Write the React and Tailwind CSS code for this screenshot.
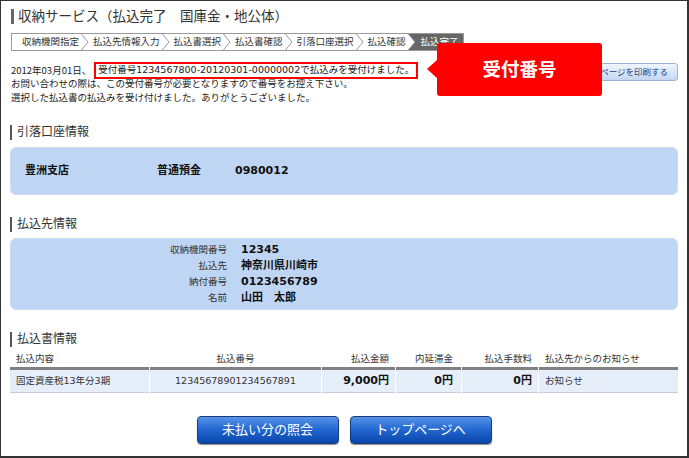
const steps = [
  "収納機関指定",
  "払込先情報入力",
  "払込書選択",
  "払込書確認",
  "引落口座選択",
  "払込確認",
];

function Chevron({ last }) {
  return (
    <svg width="8" height="16" viewBox="0 0 8 16" className="block shrink-0">
      {last && <polygon points="0,0 8,0 8,16 0,16 7,8" fill="#666666" />}
      <polyline
        points="0,-0.5 7,8 0,16.5"
        fill="none"
        stroke="#9a9a9a"
        strokeWidth="1"
      />
    </svg>
  );
}

function SectionTitle({ children }) {
  return (
    <div className="flex h-4 items-center gap-[5px]">
      <span className="h-[15px] w-[2px] bg-[#555]" />
      <span className="text-[12px] leading-4 text-[#333]">{children}</span>
    </div>
  );
}

const payee = [
  ["収納機関番号", "12345"],
  ["払込先", "神奈川県川崎市"],
  ["納付番号", "0123456789"],
  ["名前", "山田　太郎"],
];

export default function App() {
  return (
    <div className="relative h-[458px] w-[689px] overflow-hidden border-t border-l border-r-2 border-b-2 border-[#333] bg-white pl-[9px] pr-[9px] font-['DejaVu_Sans','Noto_Sans_CJK_JP',sans-serif] text-[#222]">
      {/* title */}
      <div className="mt-[7px] flex h-4 items-center gap-[4px]">
        <span className="ml-[1px] h-[15px] w-[3px] bg-[#666]" />
        <h1 className="text-[13.5px] leading-4 text-[#333]">
          収納サービス（払込完了　国庫金・地公体）
        </h1>
      </div>

      {/* steps */}
      <div className="ml-[1px] mt-[9px] flex h-[18px] w-fit border border-[#9a9a9a] text-[9.5px] leading-4 text-[#333]">
        {steps.map((s, i) => (
          <div key={s} className="flex">
            <span className={`${i === 0 ? "pl-[10px]" : "pl-[4px]"} pr-[2px]`}>
              {s}
            </span>
            <Chevron last={i === steps.length - 1} />
          </div>
        ))}
        <span className="bg-[#666] pl-[5px] pr-[4px] text-white">払込完了</span>
      </div>

      {/* message */}
      <div className="mt-[11px] flex items-start justify-between">
        <div className="pl-[1px] text-[9.5px] leading-[14px]">
          <div className="flex h-4 items-center">
            <span className="font-['Noto_Sans_CJK_JP',sans-serif]">2012年03月01日、</span>
            <span className="ml-[3px] flex h-[17px] items-center border-2 border-[#ff0000] px-[2px]">
              受付番号1234567800-20120301-00000002で払込みを受付けました。
            </span>
          </div>
          <p className="-mt-[1px]">
            お問い合わせの際は、この受付番号が必要となりますので番号をお控え下さい。
          </p>
          <p>選択した払込書の払込みを受け付けました。ありがとうございました。</p>
        </div>
        <button
          type="button"
          className="mt-[1px] h-[18px] rounded-[3px] border border-[#9cb3d3] bg-linear-to-b from-[#f1f6fd] to-[#c3d7f1] pl-[6px] pr-[9px] text-[8.5px] leading-4 text-[#1b3f78]"
        >
          このページを印刷する
        </button>
      </div>

      {/* account */}
      <div className="mt-[19px]">
        <SectionTitle>引落口座情報</SectionTitle>
      </div>
      <div className="mt-[7px] flex h-[48px] items-center rounded-[6px] border border-[#cbdcf3] bg-[#bed5f3] pl-[14px] text-[11px] font-bold leading-4 text-[#111]">
        <span className="w-[132px]">豊洲支店</span>
        <span className="w-[78px]">普通預金</span>
        <span>0980012</span>
      </div>

      {/* payee */}
      <div className="mt-[21px]">
        <SectionTitle>払込先情報</SectionTitle>
      </div>
      <div className="mt-[6px] rounded-[6px] border border-[#cbdcf3] bg-[#bed5f3] py-[3px]">
        {payee.map(([label, value]) => (
          <div key={label} className="flex h-4 items-center">
            <span className="w-[216px] text-right text-[9.5px] text-[#333]">
              {label}
            </span>
            <span className="ml-[14px] text-[11px] font-bold text-[#111]">
              {value}
            </span>
          </div>
        ))}
      </div>

      {/* slip */}
      <div className="mt-[21px]">
        <SectionTitle>払込書情報</SectionTitle>
      </div>
      <div className="mt-[5px] grid grid-cols-[139px_171px_73px_65px_76px_1fr] gap-x-px text-[9.5px] text-[#333]">
        <div className="flex h-[18px] items-center border-b-[3px] border-[#808080] pl-[6px]">払込内容</div>
        <div className="flex h-[18px] items-center justify-center border-b-[3px] border-[#808080]">払込番号</div>
        <div className="flex h-[18px] items-center justify-end border-b-[3px] border-[#808080] pr-[6px]">払込金額</div>
        <div className="flex h-[18px] items-center justify-end border-b-[3px] border-[#808080] pr-[8px]">内延滞金</div>
        <div className="flex h-[18px] items-center justify-end border-b-[3px] border-[#808080] pr-[6px]">払込手数料</div>
        <div className="flex h-[18px] items-center border-b-[3px] border-[#808080] pl-[6px]">払込先からのお知らせ</div>

        <div className="flex h-[23px] items-center border-b border-[#c5d0de] bg-[#e6eefa] pl-[6px]">固定資産税13年分3期</div>
        <div className="flex h-[23px] items-center justify-center border-b border-[#c5d0de] bg-[#e6eefa]">12345678901234567891</div>
        <div className="flex h-[23px] items-center justify-end border-b border-[#c5d0de] bg-[#e6eefa] pr-[6px] text-[11px] font-bold text-[#111]">9,000円</div>
        <div className="flex h-[23px] items-center justify-end border-b border-[#c5d0de] bg-[#e6eefa] pr-[8px] text-[11px] font-bold text-[#111]">0円</div>
        <div className="flex h-[23px] items-center justify-end border-b border-[#c5d0de] bg-[#e6eefa] pr-[6px] text-[11px] font-bold text-[#111]">0円</div>
        <div className="flex h-[23px] items-center border-b border-[#c5d0de] bg-[#e6eefa] pl-[6px]">お知らせ</div>
      </div>

      {/* buttons */}
      <div className="mt-[23px] flex justify-center gap-[11px]">
        {["未払い分の照会", "トップページへ"].map((t) => (
          <button
            key={t}
            type="button"
            className="h-[28px] w-[142px] rounded-[4px] border border-[#173b7c] bg-linear-to-b from-[#5594e6] via-[#2166cf] to-[#0946ab] text-[13px] leading-4 text-white shadow-[0_1px_1px_rgba(0,0,0,0.45)]"
          >
            {t}
          </button>
        ))}
      </div>

      {/* annotation callout */}
      <div className="absolute left-[436px] top-[42px] flex h-[53px] w-[165px] items-center justify-center rounded-[3px] bg-[#ff0000]">
        <span className="absolute left-[-10px] top-[17px] h-0 w-0 border-y-[9px] border-r-[10px] border-y-transparent border-r-[#ff0000]" />
        <span className="text-[18.5px] font-bold leading-6 text-white">受付番号</span>
      </div>
    </div>
  );
}
